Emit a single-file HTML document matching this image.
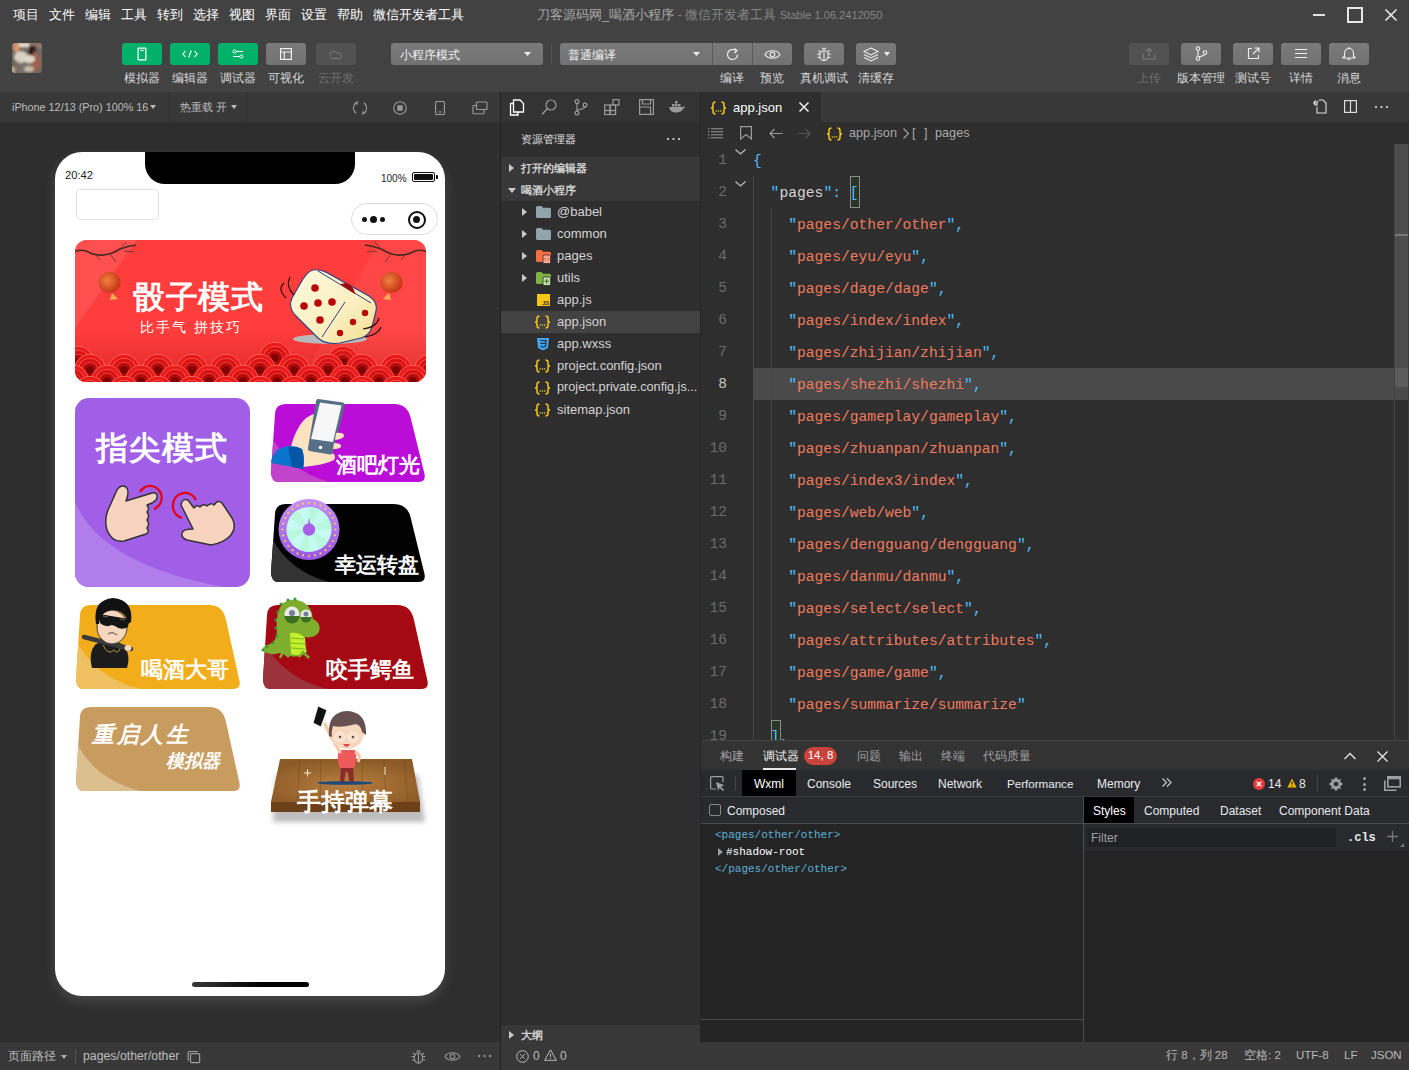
<!DOCTYPE html>
<html><head><meta charset="utf-8">
<style>
*{box-sizing:border-box;margin:0;padding:0}
html,body{width:1409px;height:1070px;overflow:hidden;background:#2e2e2e;font-family:"Liberation Sans",sans-serif;color:#ccc}
.a{position:absolute}
.t{position:absolute;white-space:pre;line-height:1}
svg{position:absolute;overflow:visible}
.btn{position:absolute;top:43px;height:22px;width:40px;border-radius:3px}
.lbl{position:absolute;top:71px;font-size:12px;line-height:14px;color:#d8d8d8;text-align:center;white-space:pre}
.mono{font-family:"Liberation Mono",monospace}
.code div{position:absolute;left:0;height:32px;line-height:32px;white-space:pre}
.ln{position:absolute;left:701px;width:26px;text-align:right;font-family:"Liberation Mono",monospace;font-size:14.5px;color:#6b6b6b;height:32px;line-height:32px}
.q{color:#4fc1ff}.s{color:#f07a5f}.k{color:#d4d4d4}
.tree .row{position:absolute;height:22px;line-height:22px;font-size:13px;color:#cccccc;white-space:pre}
</style></head><body>

<!-- ===== top menu bar + toolbar ===== -->
<div class="a" style="left:0;top:0;width:1409px;height:92px;background:#424242"></div>
<div class="t" style="left:13px;top:8px;font-size:13px;color:#f0f0f0;word-spacing:0">项目</div>
<div class="t" style="left:49px;top:8px;font-size:13px;color:#ffffff">文件</div>
<div class="t" style="left:85px;top:8px;font-size:13px;color:#ffffff">编辑</div>
<div class="t" style="left:121px;top:8px;font-size:13px;color:#ffffff">工具</div>
<div class="t" style="left:157px;top:8px;font-size:13px;color:#ffffff">转到</div>
<div class="t" style="left:193px;top:8px;font-size:13px;color:#ffffff">选择</div>
<div class="t" style="left:229px;top:8px;font-size:13px;color:#ffffff">视图</div>
<div class="t" style="left:265px;top:8px;font-size:13px;color:#ffffff">界面</div>
<div class="t" style="left:301px;top:8px;font-size:13px;color:#ffffff">设置</div>
<div class="t" style="left:337px;top:8px;font-size:13px;color:#ffffff">帮助</div>
<div class="t" style="left:373px;top:8px;font-size:13px;color:#ffffff">微信开发者工具</div>
<div class="t" style="left:537px;top:8px;font-size:13px;color:#a8a8a8">刀客源码网_喝酒小程序<span style="color:#858585;font-size:12.6px"> - 微信开发者工具 <span style="font-size:11.1px">Stable 1.06.2412050</span></span></div>
<!-- window controls -->
<div class="a" style="left:1313px;top:14px;width:12px;height:2px;background:#e0e0e0"></div>
<div class="a" style="left:1347px;top:7px;width:16px;height:16px;border:2px solid #e8e8e8"></div>
<svg style="left:1385px;top:9px" width="12" height="12"><path d="M0.5 0.5L11.5 11.5M11.5 0.5L0.5 11.5" stroke="#e8e8e8" stroke-width="1.6"/></svg>

<!-- avatar -->
<svg style="left:12px;top:43px" width="30" height="30"><defs><clipPath id="av"><rect width="30" height="30" rx="3"/></clipPath><filter id="avb"><feGaussianBlur stdDeviation="1.3"/></filter></defs>
<g clip-path="url(#av)"><rect width="30" height="30" fill="#6e6560"/><g filter="url(#avb)">
<rect x="-2" y="-2" width="34" height="8" fill="#8a7468"/><rect x="2" y="0" width="5" height="9" fill="#d8956a"/><rect x="7" y="0" width="10" height="4" fill="#e6d8c8"/>
<rect x="17" y="3" width="7" height="12" fill="#2e1c18"/><path d="M22,8 Q30,12 28,24 L22,30 L18,22 Z" fill="#a06050"/>
<ellipse cx="9" cy="14" rx="7" ry="6" fill="#d8d0c0"/><ellipse cx="17" cy="16" rx="6" ry="4" fill="#e0d8c8"/>
<rect x="4" y="20" width="16" height="10" fill="#77706a"/><ellipse cx="17" cy="26" rx="5" ry="3" fill="#c8bca8"/><rect x="-2" y="24" width="5" height="8" fill="#c0b090"/>
</g></g></svg>
<!-- green buttons -->
<div class="btn" style="left:122px;background:#02b169"></div>
<svg style="left:137px;top:47px" width="10" height="14"><rect x="1.1" y="1.1" width="7.8" height="11.8" rx="0.5" fill="none" stroke="#fff" stroke-width="1.2"/><line x1="3.2" y1="3.4" x2="6.8" y2="3.4" stroke="#fff" stroke-width="1"/></svg>
<div class="btn" style="left:170px;background:#02b169"></div>
<svg style="left:182px;top:50px" width="16" height="8"><path d="M3.5 1L0.8 4L3.5 7M12.5 1L15.2 4L12.5 7M9.3 0.5L6.7 7.5" fill="none" stroke="#fff" stroke-width="1.1"/></svg>
<div class="btn" style="left:218px;background:#02b169"></div>
<svg style="left:232px;top:49px" width="12" height="10"><path d="M3 2.5H11M1 7.5H8" stroke="#fff" stroke-width="1"/><circle cx="2.6" cy="2.5" r="1.6" fill="#02b169" stroke="#fff" stroke-width="1"/><circle cx="9.4" cy="7.5" r="1.6" fill="#02b169" stroke="#fff" stroke-width="1"/></svg>
<div class="btn" style="left:266px;background:linear-gradient(#7a7a7a,#727272)"></div>
<svg style="left:280px;top:48px" width="12" height="12"><rect x="0.6" y="0.6" width="10.8" height="10.8" fill="none" stroke="#f0f0f0" stroke-width="1.2"/><path d="M0.6 4H11.4M4.3 4V11.4" stroke="#f0f0f0" stroke-width="1.2"/></svg>
<div class="btn" style="left:316px;background:#525252"></div>
<svg style="left:328px;top:49px" width="16" height="11"><path d="M4,9.5 A3.8,3.8 0 1 1 9,4.2 A3,3 0 1 1 12,9.5 Z" fill="none" stroke="#7a7a7a" stroke-width="1"/></svg>
<div class="lbl" style="left:117px;width:50px">模拟器</div>
<div class="lbl" style="left:165px;width:50px">编辑器</div>
<div class="lbl" style="left:213px;width:50px">调试器</div>
<div class="lbl" style="left:261px;width:50px">可视化</div>
<div class="lbl" style="left:311px;width:50px;color:#6e6e6e">云开发</div>

<!-- selects -->
<div class="a" style="left:391px;top:43px;width:152px;height:22px;border-radius:3px;background:linear-gradient(#7a7a7a,#727272)"></div>
<div class="t" style="left:400px;top:49px;font-size:12px;color:#f0f0f0">小程序模式</div>
<svg style="left:524px;top:52px" width="7" height="4"><path d="M0 0H7L3.5 4Z" fill="#eee"/></svg>
<div class="a" style="left:551px;top:44px;width:1px;height:20px;background:#555"></div>
<div class="a" style="left:560px;top:43px;width:232px;height:22px;border-radius:3px;background:linear-gradient(#7a7a7a,#727272)"></div>
<div class="a" style="left:712px;top:43px;width:1px;height:22px;background:#5a5a5a"></div>
<div class="a" style="left:752px;top:43px;width:1px;height:22px;background:#5a5a5a"></div>
<div class="t" style="left:568px;top:49px;font-size:12px;color:#f0f0f0">普通编译</div>
<svg style="left:693px;top:52px" width="7" height="4"><path d="M0 0H7L3.5 4Z" fill="#eee"/></svg>
<svg style="left:725px;top:47px" width="15" height="15"><path d="M12.5 7.5A5 5 0 1 1 10.5 3.5" fill="none" stroke="#eee" stroke-width="1.2"/><path d="M9 1.5L12 3.5L9.5 6" fill="none" stroke="#eee" stroke-width="1.2"/></svg>
<svg style="left:764px;top:49px" width="17" height="11"><path d="M1 5.5C4 0.5 13 0.5 16 5.5C13 10.5 4 10.5 1 5.5Z" fill="none" stroke="#eee" stroke-width="1.1"/><circle cx="8.5" cy="5.5" r="2.3" fill="none" stroke="#eee" stroke-width="1.1"/></svg>
<div class="btn" style="left:804px;background:linear-gradient(#7a7a7a,#727272)"></div>
<svg style="left:816px;top:46px" width="16" height="16"><ellipse cx="8" cy="9.5" rx="4.2" ry="5" fill="none" stroke="#eee" stroke-width="1.1"/><path d="M8 4.5V14.5M6 3.5Q8 1 10 3.5M3.8 8H1M3.8 11.5H1.5M12.2 8H15M12.2 11.5H14.5M4.5 6L2.5 4.5M11.5 6L13.5 4.5" fill="none" stroke="#eee" stroke-width="1.1"/></svg>
<div class="btn" style="left:856px;background:linear-gradient(#7a7a7a,#727272)"></div>
<svg style="left:863px;top:47px" width="16" height="14"><path d="M8 1L15 4.5L8 8L1 4.5Z" fill="none" stroke="#eee" stroke-width="1.1"/><path d="M1 7.5L8 11L15 7.5M1 10.5L8 14L15 10.5" fill="none" stroke="#eee" stroke-width="1.1"/></svg>
<svg style="left:884px;top:52px" width="6" height="4"><path d="M0 0H6L3 4Z" fill="#eee"/></svg>
<div class="lbl" style="left:712px;width:40px">编译</div>
<div class="lbl" style="left:752px;width:40px">预览</div>
<div class="lbl" style="left:794px;width:60px">真机调试</div>
<div class="lbl" style="left:846px;width:60px">清缓存</div>

<!-- right buttons -->
<div class="btn" style="left:1129px;background:#525252"></div>
<svg style="left:1142px;top:47px" width="14" height="13"><path d="M7 9V1.5M4 4.5L7 1.5L10 4.5M1 7V12H13V7" fill="none" stroke="#777" stroke-width="1.1"/></svg>
<div class="btn" style="left:1181px;background:linear-gradient(#7a7a7a,#727272)"></div>
<svg style="left:1195px;top:46px" width="13" height="15"><circle cx="3" cy="2.5" r="1.8" fill="none" stroke="#eee" stroke-width="1.1"/><circle cx="3" cy="12.5" r="1.8" fill="none" stroke="#eee" stroke-width="1.1"/><circle cx="10" cy="6.5" r="1.8" fill="none" stroke="#eee" stroke-width="1.1"/><path d="M3 4.3V10.7M3.8 10.8Q9 10 10 8.3" fill="none" stroke="#eee" stroke-width="1.1"/></svg>
<div class="btn" style="left:1233px;background:linear-gradient(#7a7a7a,#727272)"></div>
<svg style="left:1247px;top:47px" width="13" height="13"><path d="M5 1.5H1.5V11.5H11.5V8M7.5 1H12V5.5M12 1L6 7" fill="none" stroke="#eee" stroke-width="1.1"/></svg>
<div class="btn" style="left:1281px;background:linear-gradient(#7a7a7a,#727272)"></div>
<svg style="left:1294px;top:48px" width="14" height="11"><path d="M1 1.5H13M1 5.5H13M1 9.5H13" stroke="#eee" stroke-width="1.1"/></svg>
<div class="btn" style="left:1329px;background:linear-gradient(#7a7a7a,#727272)"></div>
<svg style="left:1342px;top:46px" width="14" height="15"><path d="M2.5 11V7A4.5 4.5 0 0 1 11.5 7V11H13V12H1V11Z" fill="none" stroke="#eee" stroke-width="1.1"/><path d="M7 1V2.5M5.5 13.5H8.5" stroke="#eee" stroke-width="1.1"/></svg>
<div class="lbl" style="left:1119px;width:60px;color:#6e6e6e">上传</div>
<div class="lbl" style="left:1171px;width:60px">版本管理</div>
<div class="lbl" style="left:1223px;width:60px">测试号</div>
<div class="lbl" style="left:1271px;width:60px">详情</div>
<div class="lbl" style="left:1319px;width:60px">消息</div>

<!-- ===== simulator panel ===== -->
<div class="a" style="left:0;top:92px;width:500px;height:30px;background:#383838"></div>
<div class="t" style="left:12px;top:102px;font-size:10.8px;color:#bdbdbd">iPhone 12/13 (Pro) 100% 16</div>
<svg style="left:150px;top:105px" width="6" height="4"><path d="M0 0H6L3 4Z" fill="#bbb"/></svg>
<div class="a" style="left:168px;top:92px;width:1px;height:30px;background:#333"></div>
<div class="t" style="left:180px;top:102px;font-size:11px;color:#bdbdbd">热重载 开</div>
<svg style="left:231px;top:105px" width="6" height="4"><path d="M0 0H6L3 4Z" fill="#bbb"/></svg>
<div class="a" style="left:247px;top:92px;width:1px;height:30px;background:#333"></div>
<svg style="left:352px;top:100px" width="16" height="16"><path d="M6.2,1.9 A6.3,6.3 0 0 0 4.3,13.2 M9.8,14.1 A6.3,6.3 0 0 0 11.7,2.8" fill="none" stroke="#9a9a9a" stroke-width="1.1"/><path d="M2.6,4.2 L4.3,2.6 L5.3,4.8 M13.4,11.8 L11.7,13.4 L10.7,11.2" fill="none" stroke="#9a9a9a" stroke-width="1.1"/></svg>
<svg style="left:393px;top:101px" width="14" height="14"><circle cx="7" cy="7" r="6.3" fill="none" stroke="#999" stroke-width="1.1"/><rect x="4.3" y="4.3" width="5.4" height="5.4" fill="#999"/></svg>
<svg style="left:435px;top:101px" width="10" height="14"><rect x="0.55" y="0.55" width="8.9" height="12.9" rx="1" fill="none" stroke="#9a9a9a" stroke-width="1.1"/><path d="M3.2 11H6.8" stroke="#9a9a9a" stroke-width="1.1"/></svg>
<svg style="left:472px;top:101px" width="16" height="14"><rect x="4.55" y="1.05" width="10.4" height="7.4" rx="0.8" fill="none" stroke="#9a9a9a" stroke-width="1.1"/><path d="M4.5,4.5 H1.6 Q1,4.5 1,5.1 V12.2 Q1,12.8 1.6,12.8 H11.4 Q12,12.8 12,12.2 V8.6" fill="none" stroke="#9a9a9a" stroke-width="1.1"/></svg>

<!-- phone -->
<div class="a" style="left:55px;top:152px;width:390px;height:844px;border-radius:27px;background:#fff;box-shadow:0 5px 12px rgba(255,255,255,.13)"></div>
<div class="a" style="left:145px;top:152px;width:210px;height:32px;background:#000;border-radius:0 0 20px 20px"></div>
<div class="t" style="left:65px;top:170px;font-size:11.2px;color:#222">20:42</div>
<div class="t" style="left:381px;top:174px;font-size:10px;color:#222">100%</div>
<div class="a" style="left:412px;top:172px;width:23px;height:10px;border:1.3px solid #111;border-radius:2px;padding:1px"><div style="width:100%;height:100%;background:#111;border-radius:1px"></div></div>
<div class="a" style="left:435.5px;top:175px;width:2px;height:4px;background:#111;border-radius:0 1px 1px 0"></div>
<div class="a" style="left:76px;top:189px;width:83px;height:31px;border:1px solid #e2e2e2;border-radius:4px"></div>
<div class="a" style="left:351px;top:203px;width:87px;height:32px;border:1px solid #dcdcdc;border-radius:16px;background:#fff"></div>
<div class="a" style="left:362px;top:217px;width:5px;height:5px;border-radius:50%;background:#111"></div>
<div class="a" style="left:369.5px;top:215.5px;width:7.5px;height:7.5px;border-radius:50%;background:#111"></div>
<div class="a" style="left:379.5px;top:217px;width:5px;height:5px;border-radius:50%;background:#111"></div>
<div class="a" style="left:407.5px;top:210.5px;width:18px;height:18px;border-radius:50%;border:2.2px solid #111"></div>
<div class="a" style="left:413px;top:216px;width:7px;height:7px;border-radius:50%;background:#111"></div>
<div class="a" style="left:192px;top:982px;width:117px;height:5px;border-radius:3px;background:linear-gradient(90deg,#3a3a3a,#000 60%)"></div>

<!-- PHONE CONTENT -->
<svg style="left:0;top:0" width="1409" height="1070" viewBox="0 0 1409 1070">
<defs>
<clipPath id="cb"><rect x="75" y="240" width="351" height="142" rx="12"/></clipPath>
<linearGradient id="dg" x1="0" y1="0" x2="1" y2="1"><stop offset="0" stop-color="#fff8dc"/><stop offset="0.6" stop-color="#fbefc0"/><stop offset="1" stop-color="#f3dc8e"/></linearGradient>
<radialGradient id="lan" cx="0.4" cy="0.4" r="0.7"><stop offset="0" stop-color="#f08040"/><stop offset="1" stop-color="#c02a10"/></radialGradient>
<linearGradient id="wood" x1="0" y1="0" x2="0" y2="1"><stop offset="0" stop-color="#a0703c"/><stop offset="0.75" stop-color="#8a5a2c"/><stop offset="1" stop-color="#5a3616"/></linearGradient>
<linearGradient id="ring" x1="0" y1="0" x2="0" y2="1"><stop offset="0" stop-color="#c590f5"/><stop offset="1" stop-color="#9a55e6"/></linearGradient>
<filter id="sh" x="-20%" y="-20%" width="140%" height="160%"><feGaussianBlur stdDeviation="2.5"/></filter>
</defs>
<g clip-path="url(#cb)">
<rect x="75" y="240" width="351" height="142" fill="#ff3d3d"/>
<path d="M75,240 L137,240 L75,328 Z" fill="#ff5252" opacity="0.9"/>
<path d="M380,240 L426,240 L426,382 L300,382 Z" fill="#ff5050" opacity="0.55"/>
<linearGradient id="shd" x1="0" y1="0" x2="0" y2="1"><stop offset="0" stop-color="#b00000" stop-opacity="0"/><stop offset="1" stop-color="#900000" stop-opacity="0.35"/></linearGradient><rect x="75" y="330" width="351" height="52" fill="url(#shd)"/>
<circle cx="78" cy="362" r="16" fill="#ff7060"/><circle cx="78" cy="362" r="15.3" fill="#ea1a1c"/><circle cx="78" cy="362" r="12" fill="#ff6050"/><circle cx="78" cy="362" r="11.3" fill="#d81214"/><circle cx="78" cy="362" r="8" fill="#f04a3a"/><circle cx="78" cy="362" r="7.3" fill="#b80c0c"/><circle cx="78" cy="362" r="4" fill="#800404"/>
<circle cx="275" cy="358" r="16" fill="#ff7060"/><circle cx="275" cy="358" r="15.3" fill="#ea1a1c"/><circle cx="275" cy="358" r="12" fill="#ff6050"/><circle cx="275" cy="358" r="11.3" fill="#d81214"/><circle cx="275" cy="358" r="8" fill="#f04a3a"/><circle cx="275" cy="358" r="7.3" fill="#b80c0c"/><circle cx="275" cy="358" r="4" fill="#800404"/>
<circle cx="343" cy="362" r="16" fill="#ff7060"/><circle cx="343" cy="362" r="15.3" fill="#ea1a1c"/><circle cx="343" cy="362" r="12" fill="#ff6050"/><circle cx="343" cy="362" r="11.3" fill="#d81214"/><circle cx="343" cy="362" r="8" fill="#f04a3a"/><circle cx="343" cy="362" r="7.3" fill="#b80c0c"/><circle cx="343" cy="362" r="4" fill="#800404"/>
<circle cx="56" cy="370" r="16" fill="#ff7060"/><circle cx="56" cy="370" r="15.3" fill="#ea1a1c"/><circle cx="56" cy="370" r="12" fill="#ff6050"/><circle cx="56" cy="370" r="11.3" fill="#d81214"/><circle cx="56" cy="370" r="8" fill="#f04a3a"/><circle cx="56" cy="370" r="7.3" fill="#b80c0c"/><circle cx="56" cy="370" r="4" fill="#800404"/>
<circle cx="90" cy="370" r="16" fill="#ff7060"/><circle cx="90" cy="370" r="15.3" fill="#ea1a1c"/><circle cx="90" cy="370" r="12" fill="#ff6050"/><circle cx="90" cy="370" r="11.3" fill="#d81214"/><circle cx="90" cy="370" r="8" fill="#f04a3a"/><circle cx="90" cy="370" r="7.3" fill="#b80c0c"/><circle cx="90" cy="370" r="4" fill="#800404"/>
<circle cx="124" cy="370" r="16" fill="#ff7060"/><circle cx="124" cy="370" r="15.3" fill="#ea1a1c"/><circle cx="124" cy="370" r="12" fill="#ff6050"/><circle cx="124" cy="370" r="11.3" fill="#d81214"/><circle cx="124" cy="370" r="8" fill="#f04a3a"/><circle cx="124" cy="370" r="7.3" fill="#b80c0c"/><circle cx="124" cy="370" r="4" fill="#800404"/>
<circle cx="158" cy="370" r="16" fill="#ff7060"/><circle cx="158" cy="370" r="15.3" fill="#ea1a1c"/><circle cx="158" cy="370" r="12" fill="#ff6050"/><circle cx="158" cy="370" r="11.3" fill="#d81214"/><circle cx="158" cy="370" r="8" fill="#f04a3a"/><circle cx="158" cy="370" r="7.3" fill="#b80c0c"/><circle cx="158" cy="370" r="4" fill="#800404"/>
<circle cx="192" cy="370" r="16" fill="#ff7060"/><circle cx="192" cy="370" r="15.3" fill="#ea1a1c"/><circle cx="192" cy="370" r="12" fill="#ff6050"/><circle cx="192" cy="370" r="11.3" fill="#d81214"/><circle cx="192" cy="370" r="8" fill="#f04a3a"/><circle cx="192" cy="370" r="7.3" fill="#b80c0c"/><circle cx="192" cy="370" r="4" fill="#800404"/>
<circle cx="226" cy="370" r="16" fill="#ff7060"/><circle cx="226" cy="370" r="15.3" fill="#ea1a1c"/><circle cx="226" cy="370" r="12" fill="#ff6050"/><circle cx="226" cy="370" r="11.3" fill="#d81214"/><circle cx="226" cy="370" r="8" fill="#f04a3a"/><circle cx="226" cy="370" r="7.3" fill="#b80c0c"/><circle cx="226" cy="370" r="4" fill="#800404"/>
<circle cx="260" cy="370" r="16" fill="#ff7060"/><circle cx="260" cy="370" r="15.3" fill="#ea1a1c"/><circle cx="260" cy="370" r="12" fill="#ff6050"/><circle cx="260" cy="370" r="11.3" fill="#d81214"/><circle cx="260" cy="370" r="8" fill="#f04a3a"/><circle cx="260" cy="370" r="7.3" fill="#b80c0c"/><circle cx="260" cy="370" r="4" fill="#800404"/>
<circle cx="294" cy="370" r="16" fill="#ff7060"/><circle cx="294" cy="370" r="15.3" fill="#ea1a1c"/><circle cx="294" cy="370" r="12" fill="#ff6050"/><circle cx="294" cy="370" r="11.3" fill="#d81214"/><circle cx="294" cy="370" r="8" fill="#f04a3a"/><circle cx="294" cy="370" r="7.3" fill="#b80c0c"/><circle cx="294" cy="370" r="4" fill="#800404"/>
<circle cx="328" cy="370" r="16" fill="#ff7060"/><circle cx="328" cy="370" r="15.3" fill="#ea1a1c"/><circle cx="328" cy="370" r="12" fill="#ff6050"/><circle cx="328" cy="370" r="11.3" fill="#d81214"/><circle cx="328" cy="370" r="8" fill="#f04a3a"/><circle cx="328" cy="370" r="7.3" fill="#b80c0c"/><circle cx="328" cy="370" r="4" fill="#800404"/>
<circle cx="362" cy="370" r="16" fill="#ff7060"/><circle cx="362" cy="370" r="15.3" fill="#ea1a1c"/><circle cx="362" cy="370" r="12" fill="#ff6050"/><circle cx="362" cy="370" r="11.3" fill="#d81214"/><circle cx="362" cy="370" r="8" fill="#f04a3a"/><circle cx="362" cy="370" r="7.3" fill="#b80c0c"/><circle cx="362" cy="370" r="4" fill="#800404"/>
<circle cx="396" cy="370" r="16" fill="#ff7060"/><circle cx="396" cy="370" r="15.3" fill="#ea1a1c"/><circle cx="396" cy="370" r="12" fill="#ff6050"/><circle cx="396" cy="370" r="11.3" fill="#d81214"/><circle cx="396" cy="370" r="8" fill="#f04a3a"/><circle cx="396" cy="370" r="7.3" fill="#b80c0c"/><circle cx="396" cy="370" r="4" fill="#800404"/>
<circle cx="430" cy="370" r="16" fill="#ff7060"/><circle cx="430" cy="370" r="15.3" fill="#ea1a1c"/><circle cx="430" cy="370" r="12" fill="#ff6050"/><circle cx="430" cy="370" r="11.3" fill="#d81214"/><circle cx="430" cy="370" r="8" fill="#f04a3a"/><circle cx="430" cy="370" r="7.3" fill="#b80c0c"/><circle cx="430" cy="370" r="4" fill="#800404"/>
<circle cx="73" cy="381" r="16" fill="#ff7060"/><circle cx="73" cy="381" r="15.3" fill="#ea1a1c"/><circle cx="73" cy="381" r="12" fill="#ff6050"/><circle cx="73" cy="381" r="11.3" fill="#d81214"/><circle cx="73" cy="381" r="8" fill="#f04a3a"/><circle cx="73" cy="381" r="7.3" fill="#b80c0c"/><circle cx="73" cy="381" r="4" fill="#800404"/>
<circle cx="107" cy="381" r="16" fill="#ff7060"/><circle cx="107" cy="381" r="15.3" fill="#ea1a1c"/><circle cx="107" cy="381" r="12" fill="#ff6050"/><circle cx="107" cy="381" r="11.3" fill="#d81214"/><circle cx="107" cy="381" r="8" fill="#f04a3a"/><circle cx="107" cy="381" r="7.3" fill="#b80c0c"/><circle cx="107" cy="381" r="4" fill="#800404"/>
<circle cx="141" cy="381" r="16" fill="#ff7060"/><circle cx="141" cy="381" r="15.3" fill="#ea1a1c"/><circle cx="141" cy="381" r="12" fill="#ff6050"/><circle cx="141" cy="381" r="11.3" fill="#d81214"/><circle cx="141" cy="381" r="8" fill="#f04a3a"/><circle cx="141" cy="381" r="7.3" fill="#b80c0c"/><circle cx="141" cy="381" r="4" fill="#800404"/>
<circle cx="175" cy="381" r="16" fill="#ff7060"/><circle cx="175" cy="381" r="15.3" fill="#ea1a1c"/><circle cx="175" cy="381" r="12" fill="#ff6050"/><circle cx="175" cy="381" r="11.3" fill="#d81214"/><circle cx="175" cy="381" r="8" fill="#f04a3a"/><circle cx="175" cy="381" r="7.3" fill="#b80c0c"/><circle cx="175" cy="381" r="4" fill="#800404"/>
<circle cx="209" cy="381" r="16" fill="#ff7060"/><circle cx="209" cy="381" r="15.3" fill="#ea1a1c"/><circle cx="209" cy="381" r="12" fill="#ff6050"/><circle cx="209" cy="381" r="11.3" fill="#d81214"/><circle cx="209" cy="381" r="8" fill="#f04a3a"/><circle cx="209" cy="381" r="7.3" fill="#b80c0c"/><circle cx="209" cy="381" r="4" fill="#800404"/>
<circle cx="243" cy="381" r="16" fill="#ff7060"/><circle cx="243" cy="381" r="15.3" fill="#ea1a1c"/><circle cx="243" cy="381" r="12" fill="#ff6050"/><circle cx="243" cy="381" r="11.3" fill="#d81214"/><circle cx="243" cy="381" r="8" fill="#f04a3a"/><circle cx="243" cy="381" r="7.3" fill="#b80c0c"/><circle cx="243" cy="381" r="4" fill="#800404"/>
<circle cx="277" cy="381" r="16" fill="#ff7060"/><circle cx="277" cy="381" r="15.3" fill="#ea1a1c"/><circle cx="277" cy="381" r="12" fill="#ff6050"/><circle cx="277" cy="381" r="11.3" fill="#d81214"/><circle cx="277" cy="381" r="8" fill="#f04a3a"/><circle cx="277" cy="381" r="7.3" fill="#b80c0c"/><circle cx="277" cy="381" r="4" fill="#800404"/>
<circle cx="311" cy="381" r="16" fill="#ff7060"/><circle cx="311" cy="381" r="15.3" fill="#ea1a1c"/><circle cx="311" cy="381" r="12" fill="#ff6050"/><circle cx="311" cy="381" r="11.3" fill="#d81214"/><circle cx="311" cy="381" r="8" fill="#f04a3a"/><circle cx="311" cy="381" r="7.3" fill="#b80c0c"/><circle cx="311" cy="381" r="4" fill="#800404"/>
<circle cx="345" cy="381" r="16" fill="#ff7060"/><circle cx="345" cy="381" r="15.3" fill="#ea1a1c"/><circle cx="345" cy="381" r="12" fill="#ff6050"/><circle cx="345" cy="381" r="11.3" fill="#d81214"/><circle cx="345" cy="381" r="8" fill="#f04a3a"/><circle cx="345" cy="381" r="7.3" fill="#b80c0c"/><circle cx="345" cy="381" r="4" fill="#800404"/>
<circle cx="379" cy="381" r="16" fill="#ff7060"/><circle cx="379" cy="381" r="15.3" fill="#ea1a1c"/><circle cx="379" cy="381" r="12" fill="#ff6050"/><circle cx="379" cy="381" r="11.3" fill="#d81214"/><circle cx="379" cy="381" r="8" fill="#f04a3a"/><circle cx="379" cy="381" r="7.3" fill="#b80c0c"/><circle cx="379" cy="381" r="4" fill="#800404"/>
<circle cx="413" cy="381" r="16" fill="#ff7060"/><circle cx="413" cy="381" r="15.3" fill="#ea1a1c"/><circle cx="413" cy="381" r="12" fill="#ff6050"/><circle cx="413" cy="381" r="11.3" fill="#d81214"/><circle cx="413" cy="381" r="8" fill="#f04a3a"/><circle cx="413" cy="381" r="7.3" fill="#b80c0c"/><circle cx="413" cy="381" r="4" fill="#800404"/>
<circle cx="447" cy="381" r="16" fill="#ff7060"/><circle cx="447" cy="381" r="15.3" fill="#ea1a1c"/><circle cx="447" cy="381" r="12" fill="#ff6050"/><circle cx="447" cy="381" r="11.3" fill="#d81214"/><circle cx="447" cy="381" r="8" fill="#f04a3a"/><circle cx="447" cy="381" r="7.3" fill="#b80c0c"/><circle cx="447" cy="381" r="4" fill="#800404"/>
<circle cx="56" cy="392" r="16" fill="#ff7060"/><circle cx="56" cy="392" r="15.3" fill="#ea1a1c"/><circle cx="56" cy="392" r="12" fill="#ff6050"/><circle cx="56" cy="392" r="11.3" fill="#d81214"/><circle cx="56" cy="392" r="8" fill="#f04a3a"/><circle cx="56" cy="392" r="7.3" fill="#b80c0c"/><circle cx="56" cy="392" r="4" fill="#800404"/>
<circle cx="90" cy="392" r="16" fill="#ff7060"/><circle cx="90" cy="392" r="15.3" fill="#ea1a1c"/><circle cx="90" cy="392" r="12" fill="#ff6050"/><circle cx="90" cy="392" r="11.3" fill="#d81214"/><circle cx="90" cy="392" r="8" fill="#f04a3a"/><circle cx="90" cy="392" r="7.3" fill="#b80c0c"/><circle cx="90" cy="392" r="4" fill="#800404"/>
<circle cx="124" cy="392" r="16" fill="#ff7060"/><circle cx="124" cy="392" r="15.3" fill="#ea1a1c"/><circle cx="124" cy="392" r="12" fill="#ff6050"/><circle cx="124" cy="392" r="11.3" fill="#d81214"/><circle cx="124" cy="392" r="8" fill="#f04a3a"/><circle cx="124" cy="392" r="7.3" fill="#b80c0c"/><circle cx="124" cy="392" r="4" fill="#800404"/>
<circle cx="158" cy="392" r="16" fill="#ff7060"/><circle cx="158" cy="392" r="15.3" fill="#ea1a1c"/><circle cx="158" cy="392" r="12" fill="#ff6050"/><circle cx="158" cy="392" r="11.3" fill="#d81214"/><circle cx="158" cy="392" r="8" fill="#f04a3a"/><circle cx="158" cy="392" r="7.3" fill="#b80c0c"/><circle cx="158" cy="392" r="4" fill="#800404"/>
<circle cx="192" cy="392" r="16" fill="#ff7060"/><circle cx="192" cy="392" r="15.3" fill="#ea1a1c"/><circle cx="192" cy="392" r="12" fill="#ff6050"/><circle cx="192" cy="392" r="11.3" fill="#d81214"/><circle cx="192" cy="392" r="8" fill="#f04a3a"/><circle cx="192" cy="392" r="7.3" fill="#b80c0c"/><circle cx="192" cy="392" r="4" fill="#800404"/>
<circle cx="226" cy="392" r="16" fill="#ff7060"/><circle cx="226" cy="392" r="15.3" fill="#ea1a1c"/><circle cx="226" cy="392" r="12" fill="#ff6050"/><circle cx="226" cy="392" r="11.3" fill="#d81214"/><circle cx="226" cy="392" r="8" fill="#f04a3a"/><circle cx="226" cy="392" r="7.3" fill="#b80c0c"/><circle cx="226" cy="392" r="4" fill="#800404"/>
<circle cx="260" cy="392" r="16" fill="#ff7060"/><circle cx="260" cy="392" r="15.3" fill="#ea1a1c"/><circle cx="260" cy="392" r="12" fill="#ff6050"/><circle cx="260" cy="392" r="11.3" fill="#d81214"/><circle cx="260" cy="392" r="8" fill="#f04a3a"/><circle cx="260" cy="392" r="7.3" fill="#b80c0c"/><circle cx="260" cy="392" r="4" fill="#800404"/>
<circle cx="294" cy="392" r="16" fill="#ff7060"/><circle cx="294" cy="392" r="15.3" fill="#ea1a1c"/><circle cx="294" cy="392" r="12" fill="#ff6050"/><circle cx="294" cy="392" r="11.3" fill="#d81214"/><circle cx="294" cy="392" r="8" fill="#f04a3a"/><circle cx="294" cy="392" r="7.3" fill="#b80c0c"/><circle cx="294" cy="392" r="4" fill="#800404"/>
<circle cx="328" cy="392" r="16" fill="#ff7060"/><circle cx="328" cy="392" r="15.3" fill="#ea1a1c"/><circle cx="328" cy="392" r="12" fill="#ff6050"/><circle cx="328" cy="392" r="11.3" fill="#d81214"/><circle cx="328" cy="392" r="8" fill="#f04a3a"/><circle cx="328" cy="392" r="7.3" fill="#b80c0c"/><circle cx="328" cy="392" r="4" fill="#800404"/>
<circle cx="362" cy="392" r="16" fill="#ff7060"/><circle cx="362" cy="392" r="15.3" fill="#ea1a1c"/><circle cx="362" cy="392" r="12" fill="#ff6050"/><circle cx="362" cy="392" r="11.3" fill="#d81214"/><circle cx="362" cy="392" r="8" fill="#f04a3a"/><circle cx="362" cy="392" r="7.3" fill="#b80c0c"/><circle cx="362" cy="392" r="4" fill="#800404"/>
<circle cx="396" cy="392" r="16" fill="#ff7060"/><circle cx="396" cy="392" r="15.3" fill="#ea1a1c"/><circle cx="396" cy="392" r="12" fill="#ff6050"/><circle cx="396" cy="392" r="11.3" fill="#d81214"/><circle cx="396" cy="392" r="8" fill="#f04a3a"/><circle cx="396" cy="392" r="7.3" fill="#b80c0c"/><circle cx="396" cy="392" r="4" fill="#800404"/>
<circle cx="430" cy="392" r="16" fill="#ff7060"/><circle cx="430" cy="392" r="15.3" fill="#ea1a1c"/><circle cx="430" cy="392" r="12" fill="#ff6050"/><circle cx="430" cy="392" r="11.3" fill="#d81214"/><circle cx="430" cy="392" r="8" fill="#f04a3a"/><circle cx="430" cy="392" r="7.3" fill="#b80c0c"/><circle cx="430" cy="392" r="4" fill="#800404"/>
<path d="M74,252 Q80,249 86,251 Q95,256 104,255 Q112,254 120,249 Q128,246 136,245" fill="none" stroke="#4a2a20" stroke-width="1.6"/>
<path d="M96,255 L100,260 M110,254 L116,262 M120,249 L126,242 M124,251 L134,252" fill="none" stroke="#5a3028" stroke-width="0.8"/>
<path d="M427,252 Q421,249 415,251 Q406,256 397,255 Q389,254 381,249 Q373,246 365,245" fill="none" stroke="#4a2a20" stroke-width="1.6"/>
<path d="M405,255 L401,260 M391,254 L385,262 M381,249 L375,242 M377,251 L367,252" fill="none" stroke="#5a3028" stroke-width="0.8"/>
<ellipse cx="109.5" cy="282.5" rx="11" ry="10.5" fill="url(#lan)"/>
<path d="M112,293 L118,299 L110,300 Z" fill="#f0b050"/>
<ellipse cx="391.5" cy="282.5" rx="11" ry="10.5" fill="url(#lan)"/>
<path d="M389,293 L383,299 L391,300 Z" fill="#f0b050"/>
<ellipse cx="330" cy="339" rx="37" ry="5" fill="#b9b9b9"/>
<path d="M317,270 Q310,268 303,279 L292,298 Q288,307 295,315 L318,338 Q326,345 340,343 L361,338 Q369,336 372,327 L376,311 Q378,302 369,296 L331,275 Q323,270 317,270 Z" fill="url(#dg)" stroke="#2c3f86" stroke-width="1.1"/>
<path d="M318,271 L371,303" fill="none" stroke="#2c3f86" stroke-width="1"/>
<path d="M345,302 L322,337" fill="none" stroke="#2c3f86" stroke-width="1"/>
<path d="M347,283 Q355,288 355,294 Q348,290 340,284 Z" fill="#a00a0a"/>
<circle cx="315" cy="288" r="3.8" fill="#b80808"/>
<circle cx="304" cy="306" r="3.8" fill="#b80808"/>
<circle cx="318" cy="303" r="3.8" fill="#b80808"/>
<circle cx="332" cy="302" r="3.8" fill="#b80808"/>
<circle cx="320" cy="320" r="3.8" fill="#b80808"/>
<circle cx="365" cy="313" r="3.2" fill="#b80808"/>
<circle cx="353" cy="322" r="3.2" fill="#b80808"/>
<circle cx="340" cy="333" r="3.2" fill="#b80808"/>
<path d="M290,277 Q285,286 294,295 M284,283 Q277,289 286,298" fill="none" stroke="#2a1010" stroke-width="1.2"/>
<path d="M379,318 Q377,327 363,329 M381,327 Q378,335 365,337" fill="none" stroke="#2a1010" stroke-width="1.2"/>
</g>
<text x="133" y="307.5" font-family="Liberation Sans, sans-serif" font-size="32" font-weight="bold" fill="#fff" letter-spacing="0.5">骰子模式</text>
<text x="140" y="332" font-family="Liberation Sans, sans-serif" font-size="14" fill="#fff" letter-spacing="2">比手气 拼技巧</text>
<clipPath id="cp"><rect x="75" y="398" width="175" height="189" rx="14"/></clipPath>
<g clip-path="url(#cp)"><rect x="75" y="398" width="175" height="189" fill="#a05fe6"/>
<path d="M73,496 Q95,565 234,589 L73,589 Z" fill="#b07deb"/></g>
<text x="96" y="459" font-family="Liberation Sans, sans-serif" font-size="32" font-weight="bold" fill="#fff" letter-spacing="1">指尖模式</text>
<path d="M152,486 A12,12 0 0 1 154,509" fill="none" stroke="#e60012" stroke-width="2.2"/>
<path d="M140,492 A12,12 0 0 1 152,486" fill="none" stroke="#e60012" stroke-width="2.2"/>
<path d="M117,490 Q121,484 126,487 Q130,491 126,501 L152,493 Q158,492 157,498 Q156,502 147,505 Q150,509 147,512 Q150,516 147,520 Q150,524 147,528 Q150,532 146,534 L124,541 Q112,543 107,530 Q104,520 108,510 Z" fill="#f8d3c0" stroke="#333" stroke-width="1.5" stroke-linejoin="round"/>
<path d="M196,500 A12,12 0 0 0 173,505 A12,12 0 0 0 182,518" fill="none" stroke="#e60012" stroke-width="2.2"/>
<path d="M181,505 Q182,498 188,500 L194,508 Q197,504 200,507 Q203,503 207,506 Q211,502 214,505 Q218,499 222,503 L232,518 Q237,527 231,535 Q224,543 211,545 L187,540 Q181,538 182,533 Q183,529 193,529 Z" fill="#f8d3c0" stroke="#333" stroke-width="1.5" stroke-linejoin="round"/>
<clipPath id="cm"><path d="M285.5,404 L394,404 Q408,404 411,419 L424.5,474 Q426,482 419,482 L279,482 Q271,482 271,472 L275,414 Q275.5,404 285.5,404 Z"/></clipPath>
<g clip-path="url(#cm)"><rect x="269" y="402" width="160" height="82" fill="#bb0dd8"/><path d="M269,431 Q287.75,474.35 338,484 L269,484 Z" fill="#c344cc"/></g>
<path d="M290,452 Q292,438 300,425 Q306,416 316,413 L331,452 Q337,455 334,460 Q325,465 303,467 Z" fill="#fde2c2"/>
<path d="M271,463 Q272,451 283,447 Q294,444 302,449 Q305,458 303,469 Z" fill="#0a74cc"/>
<path d="M288,447 Q296,446 302,449 Q305,458 303,469 L292,467 Z" fill="#0656a8"/>
<path d="M318.5,399 L343,402.6 Q345,403 344.5,406 L333,452 Q332.5,455 330,454.5 L309.5,451 Q307.5,450.5 308,448 L316,401 Q316.5,398.5 318.5,399 Z" fill="#566f86"/>
<path d="M320,402.5 L341.5,405.5 L333,442 L311,439 Z" fill="#f7f7f7"/>
<circle cx="320.5" cy="447.5" r="1.8" fill="#fff"/>
<path d="M336,433 Q344,432 344,436 Q343,439 335,440 M334,443 Q342,443 341,447 Q339,449 333,449" fill="#fde2c2"/>
<text x="336" y="472" font-family="Liberation Sans, sans-serif" font-size="21" font-weight="bold" fill="#fff">酒吧灯光</text>
<clipPath id="ck"><path d="M285.5,504 L394,504 Q408,504 411,519 L424.5,574 Q426,582 419,582 L279,582 Q271,582 271,572 L275,514 Q275.5,504 285.5,504 Z"/></clipPath>
<g clip-path="url(#ck)"><rect x="269" y="502" width="160" height="82" fill="#020202"/><path d="M269,532 Q287.75,574.5 338,584 L269,584 Z" fill="#333333"/></g>
<circle cx="309" cy="529.5" r="30.5" fill="url(#ring)"/>
<circle cx="309" cy="529.5" r="22.5" fill="#c6fbf4"/>
<path d="M309,529.5 L309.00,507.00 A22.5,22.5 0 0 1 320.25,510.01 Z" fill="#b8f8dc"/>
<path d="M309,529.5 L328.49,518.25 A22.5,22.5 0 0 1 331.50,529.50 Z" fill="#b8f8dc"/>
<path d="M309,529.5 L328.49,540.75 A22.5,22.5 0 0 1 320.25,548.99 Z" fill="#b8f8dc"/>
<path d="M309,529.5 L309.00,552.00 A22.5,22.5 0 0 1 297.75,548.99 Z" fill="#b8f8dc"/>
<path d="M309,529.5 L289.51,540.75 A22.5,22.5 0 0 1 286.50,529.50 Z" fill="#b8f8dc"/>
<path d="M309,529.5 L289.51,518.25 A22.5,22.5 0 0 1 297.75,510.01 Z" fill="#b8f8dc"/>
<circle cx="335.50" cy="529.50" r="1.1" fill="#f7d24a"/>
<circle cx="334.84" cy="535.40" r="1.1" fill="#f7d24a"/>
<circle cx="332.88" cy="541.00" r="1.1" fill="#f7d24a"/>
<circle cx="329.72" cy="546.02" r="1.1" fill="#f7d24a"/>
<circle cx="325.52" cy="550.22" r="1.1" fill="#f7d24a"/>
<circle cx="320.50" cy="553.38" r="1.1" fill="#f7d24a"/>
<circle cx="314.90" cy="555.34" r="1.1" fill="#f7d24a"/>
<circle cx="309.00" cy="556.00" r="1.1" fill="#f7d24a"/>
<circle cx="303.10" cy="555.34" r="1.1" fill="#f7d24a"/>
<circle cx="297.50" cy="553.38" r="1.1" fill="#f7d24a"/>
<circle cx="292.48" cy="550.22" r="1.1" fill="#f7d24a"/>
<circle cx="288.28" cy="546.02" r="1.1" fill="#f7d24a"/>
<circle cx="285.12" cy="541.00" r="1.1" fill="#f7d24a"/>
<circle cx="283.16" cy="535.40" r="1.1" fill="#f7d24a"/>
<circle cx="282.50" cy="529.50" r="1.1" fill="#f7d24a"/>
<circle cx="283.16" cy="523.60" r="1.1" fill="#f7d24a"/>
<circle cx="285.12" cy="518.00" r="1.1" fill="#f7d24a"/>
<circle cx="288.28" cy="512.98" r="1.1" fill="#f7d24a"/>
<circle cx="292.48" cy="508.78" r="1.1" fill="#f7d24a"/>
<circle cx="297.50" cy="505.62" r="1.1" fill="#f7d24a"/>
<circle cx="303.10" cy="503.66" r="1.1" fill="#f7d24a"/>
<circle cx="309.00" cy="503.00" r="1.1" fill="#f7d24a"/>
<circle cx="314.90" cy="503.66" r="1.1" fill="#f7d24a"/>
<circle cx="320.50" cy="505.62" r="1.1" fill="#f7d24a"/>
<circle cx="325.52" cy="508.78" r="1.1" fill="#f7d24a"/>
<circle cx="329.72" cy="512.98" r="1.1" fill="#f7d24a"/>
<circle cx="332.88" cy="518.00" r="1.1" fill="#f7d24a"/>
<circle cx="334.84" cy="523.60" r="1.1" fill="#f7d24a"/>
<path d="M307.5,526.5 L309,517.5 L310.5,526.5 Z" fill="#a860e8"/>
<circle cx="309" cy="529.5" r="6.2" fill="#a860e8"/>
<text x="335" y="572" font-family="Liberation Sans, sans-serif" font-size="21" font-weight="bold" fill="#fff">幸运转盘</text>
<clipPath id="co"><path d="M90.5,605 L209,605 Q223,605 226,620 L239.5,681 Q241,689 234,689 L84,689 Q76,689 76,679 L80,615 Q80.5,605 90.5,605 Z"/></clipPath>
<g clip-path="url(#co)"><rect x="74" y="603" width="170" height="90" fill="#f2ae1a"/><path d="M74,636 Q94.5,681.05 150,691 L74,691 Z" fill="#efc05f"/></g>
<path d="M92,668 Q88,652 96,644 Q110,637 124,645 Q131,655 127,668 Z" fill="#1c1c1c"/>
<path d="M103,645 Q108,656 114,650 Q118,656 121,646" fill="none" stroke="#c8a040" stroke-width="0.9"/>
<path d="M84,637 L131,649" stroke="#3a3a3a" stroke-width="4.5" stroke-linecap="round"/>
<ellipse cx="112" cy="627" rx="15" ry="17" fill="#f6d6bf" stroke="#222" stroke-width="0.8"/>
<path d="M96,624 Q92,600 113,598 Q134,600 131,622 L128,624 Q126,611 113,610 Q100,611 99,624 Z" fill="#111"/>
<path d="M99,614 L129,619 L128,627 Q121,631 115,626 L112,625 Q105,628 100,623 Z" fill="#151515"/>
<path d="M103,616 L108,617 M120,619 L125,620" stroke="#777" stroke-width="0.8"/>
<path d="M108,634 Q112,631 117,635" fill="none" stroke="#333" stroke-width="0.9"/>
<ellipse cx="128" cy="648" rx="3.5" ry="3" fill="#f6d6bf"/>
<text x="141" y="677" font-family="Liberation Sans, sans-serif" font-size="22" font-weight="bold" fill="#fff">喝酒大哥</text>
<clipPath id="cr"><path d="M277.5,605 L397,605 Q411,605 414,620 L427.5,681 Q429,689 422,689 L271,689 Q263,689 263,679 L267,615 Q267.5,605 277.5,605 Z"/></clipPath>
<g clip-path="url(#cr)"><rect x="261" y="603" width="170" height="90" fill="#a50a14"/><path d="M261,636 Q281.5,681.05 337,691 L261,691 Z" fill="#9c323c"/></g>
<path d="M283,603 Q292,597 303,602 Q312,607 313,619 Q322,623 319,632 Q315,639 303,637 L307,652 Q301,658 290,656 L280,653 Q270,656 263,651 Q261,646 270,644 Q277,641 277,630 Q275,612 283,603 Z" fill="#7fae2e"/>
<circle cx="281" cy="604" r="1.6" fill="#3e9a3e"/>
<circle cx="288" cy="600" r="1.6" fill="#3e9a3e"/>
<circle cx="295" cy="599" r="1.6" fill="#3e9a3e"/>
<circle cx="278" cy="612" r="1.6" fill="#3e9a3e"/>
<circle cx="276" cy="620" r="1.6" fill="#3e9a3e"/>
<circle cx="276" cy="628" r="1.6" fill="#3e9a3e"/>
<circle cx="277" cy="636" r="1.6" fill="#3e9a3e"/>
<circle cx="273" cy="643" r="1.6" fill="#3e9a3e"/>
<circle cx="267" cy="647" r="1.6" fill="#3e9a3e"/>
<circle cx="263" cy="650" r="1.6" fill="#3e9a3e"/>
<path d="M290,633 Q300,632 305,638 L306,652 Q299,657 291,654 Z" fill="#c2f02c"/>
<path d="M291,638 L304,639 M291,643 L305,644 M291,648 L305,649" stroke="#6aa828" stroke-width="0.8"/>
<circle cx="292" cy="614" r="7.5" fill="#e8ece8"/><circle cx="306" cy="615" r="5.5" fill="#e8ece8"/>
<circle cx="292" cy="613" r="3" fill="#7a7a9a"/><circle cx="306" cy="614" r="2.5" fill="#7a7a9a"/>
<path d="M284.5,616 A7.5,7.5 0 0 0 299.5,616 Z" fill="#3e6e22"/><path d="M300.5,617 A5.5,5.5 0 0 0 311.5,617 Z" fill="#3e6e22"/>
<path d="M280,658 L283,652 L289,657 M299,657 L303,652 L309,658" fill="none" stroke="#7fae2e" stroke-width="2.5"/>
<text x="326" y="677" font-family="Liberation Sans, sans-serif" font-size="22" font-weight="bold" fill="#fff">咬手鳄鱼</text>
<clipPath id="ct"><path d="M90.5,707 L209,707 Q223,707 226,722 L239.5,783 Q241,791 234,791 L84,791 Q76,791 76,781 L80,717 Q80.5,707 90.5,707 Z"/></clipPath>
<g clip-path="url(#ct)"><rect x="74" y="705" width="170" height="90" fill="#c89c5e"/><path d="M74,738 Q94.5,783.05 150,793 L74,793 Z" fill="#dbbf8f"/></g>
<text x="92" y="742" font-family="Liberation Sans, sans-serif" font-size="22" font-weight="bold" font-style="italic" fill="#fff" letter-spacing="2.5">重启人生</text>
<text x="166" y="767" font-family="Liberation Sans, sans-serif" font-size="18" font-weight="bold" font-style="italic" fill="#fff">模拟器</text>
<path d="M276,775 L418,775 L425,822 L273,822 Z" fill="#888" opacity="0.55" filter="url(#sh)"/>
<radialGradient id="wtop" cx="0.5" cy="0.6" r="0.6"><stop offset="0" stop-color="#b88040"/><stop offset="1" stop-color="#8c5a28"/></radialGradient>
<path d="M280,759 L412,759 L420,802 L271,802 Z" fill="url(#wtop)"/>
<rect x="271" y="802" width="149" height="10" fill="#6e4018"/>
<path d="M300,759 L297,802 M321,759 L320,802 M362,759 L363,802 M384,759 L386,802 M404,759 L408,802" stroke="#6a4018" stroke-width="0.7" opacity="0.55"/>
<ellipse cx="345" cy="783" rx="28" ry="1.8" fill="#1c4a7a"/>
<path d="M304,773 L311,773 M307.5,769.5 L307.5,776.5 M385,767 L385,775" stroke="#f4e8d8" stroke-width="1"/>
<path d="M341,767 L340,782 L344,782 L345.5,772 L348,772 L349.5,782 L354,782 L353,767 Z" fill="#8a2a2a"/>
<path d="M339,750 Q336,760 340,768 L354,768 Q358,758 355,750 Z" fill="#ee5a5c"/>
<path d="M340,752 L331,737 L325,724" fill="none" stroke="#f6c9a8" stroke-width="3.2" stroke-linecap="round"/>
<path d="M355,752 Q362,755 358,762" fill="none" stroke="#f6c9a8" stroke-width="3"/>
<path d="M318,706 L327,710 L321,727 L313,723 Z" fill="#111" stroke="#fff" stroke-width="0.9"/>
<ellipse cx="347" cy="733" rx="17" ry="16" fill="#f8d7bf"/>
<path d="M329,736 Q327,712 347,711 Q367,712 366,735 L362,732 Q360,722 352,725 Q340,728 333,726 Q331,732 332,737 Z" fill="#665050"/>
<circle cx="340" cy="737" r="4.3" fill="none" stroke="#fff" stroke-width="1"/><circle cx="353" cy="737" r="4.3" fill="none" stroke="#fff" stroke-width="1"/>
<circle cx="340" cy="737" r="1" fill="#222"/><circle cx="353" cy="737" r="1" fill="#222"/>
<path d="M343,744 Q346.5,750 350,744 Z" fill="#e04848"/>
<text x="297" y="810" font-family="Liberation Sans, sans-serif" font-size="24" font-weight="bold" fill="#fff">手持弹幕</text>
</svg>
<!-- simulator bottom bar -->
<div class="a" style="left:0;top:1042px;width:500px;height:28px;background:#383838"></div>
<div class="t" style="left:8px;top:1050px;font-size:12px;color:#bdbdbd">页面路径</div>
<svg style="left:61px;top:1055px" width="6" height="4"><path d="M0 0H6L3 4Z" fill="#aaa"/></svg>
<div class="a" style="left:75px;top:1049px;width:1px;height:15px;background:#555"></div>
<div class="t" style="left:83px;top:1050px;font-size:12.3px;color:#bdbdbd">pages/other/other</div>
<svg style="left:186px;top:1049px" width="16" height="16"><path d="M2.2,11.7 V3.5 Q2.2,2.5 3.2,2.5 H11.8" fill="none" stroke="#a0a0a0" stroke-width="1.15"/><rect x="4.5" y="4.6" width="9.1" height="9" rx="1" fill="none" stroke="#a0a0a0" stroke-width="1.15"/></svg>
<svg style="left:410px;top:1048px" width="17" height="17"><ellipse cx="8.5" cy="10" rx="4.2" ry="5.2" fill="none" stroke="#999" stroke-width="1.1"/><path d="M8.5 5V15.2M6.5 4Q8.5 1.5 10.5 4M4.3 8.5H1.5M4.3 12H2M12.7 8.5H15.5M12.7 12H15M5 6.5L3 5M12 6.5L14 5" fill="none" stroke="#999" stroke-width="1.1"/></svg>
<svg style="left:444px;top:1051px" width="17" height="11"><path d="M1 5.5C4 0.5 13 0.5 16 5.5C13 10.5 4 10.5 1 5.5Z" fill="none" stroke="#999" stroke-width="1.1"/><circle cx="8.5" cy="5.5" r="2.3" fill="none" stroke="#999" stroke-width="1.1"/></svg>
<svg style="left:477px;top:1054px" width="16" height="4"><circle cx="2.0" cy="2" r="1.1" fill="#a0a0a0"/><circle cx="7.5" cy="2" r="1.1" fill="#a0a0a0"/><circle cx="13.0" cy="2" r="1.1" fill="#a0a0a0"/></svg>

<!-- divider sim/explorer -->
<div class="a" style="left:500px;top:92px;width:1px;height:978px;background:#1f1f1f"></div>

<!-- ===== explorer ===== -->
<!-- ===== explorer ===== -->
<div class="a" style="left:501px;top:92px;width:200px;height:950px;background:#2e2e2e"></div>
<div class="a" style="left:501px;top:92px;width:200px;height:30px;background:#333333"></div>
<svg style="left:509px;top:99px" width="16" height="17"><path d="M4.5 4.5H1.5V16H9V13" fill="none" stroke="#fff" stroke-width="1.3"/><path d="M4.5 1H11L14.5 4.5V13H4.5Z" fill="none" stroke="#fff" stroke-width="1.3"/></svg>
<svg style="left:541px;top:99px" width="16" height="17"><circle cx="10" cy="6" r="5" fill="none" stroke="#9a9a9a" stroke-width="1.2"/><path d="M6.5 9.5L1 15.5" stroke="#9a9a9a" stroke-width="1.3"/></svg>
<svg style="left:574px;top:99px" width="14" height="17"><circle cx="3" cy="2.5" r="1.9" fill="none" stroke="#9a9a9a" stroke-width="1.2"/><circle cx="3" cy="14" r="1.9" fill="none" stroke="#9a9a9a" stroke-width="1.2"/><circle cx="11" cy="6" r="1.9" fill="none" stroke="#9a9a9a" stroke-width="1.2"/><path d="M3 4.4V12.1M3 11Q10 10 11 8" fill="none" stroke="#9a9a9a" stroke-width="1.2"/></svg>
<svg style="left:604px;top:99px" width="16" height="16"><rect x="0.6" y="6" width="5.5" height="5.5" fill="none" stroke="#9a9a9a" stroke-width="1.2"/><rect x="6.1" y="6" width="5.5" height="5.5" fill="none" stroke="#9a9a9a" stroke-width="1.2"/><rect x="0.6" y="11.5" width="5.5" height="4" fill="none" stroke="#9a9a9a" stroke-width="1.2"/><rect x="6.1" y="11.5" width="5.5" height="4" fill="none" stroke="#9a9a9a" stroke-width="1.2"/><rect x="9" y="0.6" width="6" height="5.5" fill="none" stroke="#9a9a9a" stroke-width="1.2"/></svg>
<svg style="left:639px;top:99px" width="15" height="16"><path d="M0.6 0.6H14.4V15.4H0.6Z" fill="none" stroke="#9a9a9a" stroke-width="1.2"/><path d="M3.5 0.6V5H11.5V0.6M0.6 8H11.5V15.4" fill="none" stroke="#9a9a9a" stroke-width="1.2"/></svg>
<svg style="left:668px;top:101px" width="18" height="12"><path d="M1 6H15Q16 5 17 5.5Q16.5 7 15.5 7.5Q13 12 7 11.5Q2 11 1 6Z" fill="#9a9a9a"/><rect x="4" y="3" width="2.5" height="2.5" fill="#9a9a9a"/><rect x="7" y="3" width="2.5" height="2.5" fill="#9a9a9a"/><rect x="10" y="3" width="2.5" height="2.5" fill="#9a9a9a"/><rect x="7" y="0" width="2.5" height="2.5" fill="#9a9a9a"/></svg>
<div class="t" style="left:521px;top:134px;font-size:11px;color:#e0e0e0">资源管理器</div>
<svg style="left:666px;top:137px" width="16" height="4"><circle cx="2.0" cy="2" r="1.1" fill="#e0e0e0"/><circle cx="7.5" cy="2" r="1.1" fill="#e0e0e0"/><circle cx="13.0" cy="2" r="1.1" fill="#e0e0e0"/></svg>
<div class="a" style="left:501px;top:157px;width:199px;height:44px;background:#383838"></div>
<svg style="left:509px;top:164px" width="5" height="8"><path d="M0 0L5 4L0 8Z" fill="#c8c8c8"/></svg>
<div class="t" style="left:521px;top:163px;font-size:11px;color:#d0d0d0;font-weight:bold">打开的编辑器</div>
<svg style="left:508px;top:188px" width="8" height="5"><path d="M0 0H8L4 5Z" fill="#c8c8c8"/></svg>
<div class="t" style="left:521px;top:185px;font-size:11px;color:#d0d0d0;font-weight:bold">喝酒小程序</div>
<div class="a" style="left:501px;top:311px;width:199px;height:22px;background:#424242"></div>
<!-- folder rows -->
<svg style="left:522px;top:208px" width="5" height="8"><path d="M0 0L5 4L0 8Z" fill="#c8c8c8"/></svg>
<svg style="left:536px;top:206px" width="15" height="12"><path d="M0 1.5Q0 0 1.5 0H5.5L7 1.8H13.5Q15 1.8 15 3.3V10.5Q15 12 13.5 12H1.5Q0 12 0 10.5Z" fill="#90a4ae"/></svg>
<div class="t" style="left:557px;top:205px;font-size:13px;color:#d4d4d4">@babel</div>
<svg style="left:522px;top:230px" width="5" height="8"><path d="M0 0L5 4L0 8Z" fill="#c8c8c8"/></svg>
<svg style="left:536px;top:228px" width="15" height="12"><path d="M0 1.5Q0 0 1.5 0H5.5L7 1.8H13.5Q15 1.8 15 3.3V10.5Q15 12 13.5 12H1.5Q0 12 0 10.5Z" fill="#90a4ae"/></svg>
<div class="t" style="left:557px;top:227px;font-size:13px;color:#d4d4d4">common</div>
<svg style="left:522px;top:252px" width="5" height="8"><path d="M0 0L5 4L0 8Z" fill="#c8c8c8"/></svg>
<svg style="left:536px;top:250px" width="15" height="14"><path d="M0 1.5Q0 0 1.5 0H5.5L7 1.8H13.5Q15 1.8 15 3.3V10.5Q15 12 13.5 12H1.5Q0 12 0 10.5Z" fill="#ff6e40"/><rect x="7" y="5" width="7.5" height="8.5" rx="1" fill="#ffab91" stroke="#2c2c2c" stroke-width="0.8"/><path d="M9.5 7.8L8.5 9.2L9.5 10.6M12 7.8L13 9.2L12 10.6" fill="none" stroke="#d84315" stroke-width="0.8"/></svg>
<div class="t" style="left:557px;top:249px;font-size:13px;color:#d4d4d4">pages</div>
<svg style="left:522px;top:274px" width="5" height="8"><path d="M0 0L5 4L0 8Z" fill="#c8c8c8"/></svg>
<svg style="left:536px;top:272px" width="15" height="14"><path d="M0 1.5Q0 0 1.5 0H5.5L7 1.8H13.5Q15 1.8 15 3.3V10.5Q15 12 13.5 12H1.5Q0 12 0 10.5Z" fill="#7cb342"/><rect x="7" y="5" width="7.5" height="8.5" rx="1" fill="#c5e1a5" stroke="#2c2c2c" stroke-width="0.8"/><path d="M10.7 7V11.5M8.5 9.2H13" stroke="#33691e" stroke-width="1"/></svg>
<div class="t" style="left:557px;top:271px;font-size:13px;color:#d4d4d4">utils</div>
<div class="a" style="left:537px;top:294px;width:13px;height:12px;background:#f5c518"></div>
<div class="t" style="left:542px;top:300px;font-size:6px;color:#333;font-weight:bold">JS</div>
<div class="t" style="left:557px;top:293px;font-size:13px;color:#d4d4d4">app.js</div>
<svg style="left:534px;top:315px" width="17" height="14"><path d="M5.5,1 Q3,1 3,3.5 L3,5.5 Q3,7 1,7 Q3,7 3,8.5 L3,10.5 Q3,13 5.5,13 M11.5,1 Q14,1 14,3.5 L14,5.5 Q14,7 16,7 Q14,7 14,8.5 L14,10.5 Q14,13 11.5,13" fill="none" stroke="#f5c518" stroke-width="1.5"/><circle cx="6.3" cy="10" r="0.8" fill="#f5c518"/><circle cx="8.5" cy="10" r="0.8" fill="#f5c518"/><circle cx="10.7" cy="10" r="0.8" fill="#f5c518"/></svg>
<div class="t" style="left:557px;top:315px;font-size:13px;color:#d4d4d4">app.json</div>
<svg style="left:536px;top:338px" width="14" height="13"><path d="M1 0H13L12 10L7 12.5L2 10Z" fill="#42a5f5"/><path d="M4 2.5H10L9.6 8L7 9.2L4.5 8" fill="none" stroke="#2c2c2c" stroke-width="1.2"/><path d="M4.3 5.3H9.7" stroke="#2c2c2c" stroke-width="1.2"/></svg>
<div class="t" style="left:557px;top:337px;font-size:13px;color:#d4d4d4">app.wxss</div>
<svg style="left:534px;top:359px" width="17" height="14"><path d="M5.5,1 Q3,1 3,3.5 L3,5.5 Q3,7 1,7 Q3,7 3,8.5 L3,10.5 Q3,13 5.5,13 M11.5,1 Q14,1 14,3.5 L14,5.5 Q14,7 16,7 Q14,7 14,8.5 L14,10.5 Q14,13 11.5,13" fill="none" stroke="#f5c518" stroke-width="1.5"/><circle cx="6.3" cy="10" r="0.8" fill="#f5c518"/><circle cx="8.5" cy="10" r="0.8" fill="#f5c518"/><circle cx="10.7" cy="10" r="0.8" fill="#f5c518"/></svg>
<div class="t" style="left:557px;top:359px;font-size:13px;color:#d4d4d4">project.config.json</div>
<svg style="left:534px;top:381px" width="17" height="14"><path d="M5.5,1 Q3,1 3,3.5 L3,5.5 Q3,7 1,7 Q3,7 3,8.5 L3,10.5 Q3,13 5.5,13 M11.5,1 Q14,1 14,3.5 L14,5.5 Q14,7 16,7 Q14,7 14,8.5 L14,10.5 Q14,13 11.5,13" fill="none" stroke="#f5c518" stroke-width="1.5"/><circle cx="6.3" cy="10" r="0.8" fill="#f5c518"/><circle cx="8.5" cy="10" r="0.8" fill="#f5c518"/><circle cx="10.7" cy="10" r="0.8" fill="#f5c518"/></svg>
<div class="t" style="left:557px;top:381px;font-size:12.7px;color:#d4d4d4">project.private.config.js...</div>
<svg style="left:534px;top:403px" width="17" height="14"><path d="M5.5,1 Q3,1 3,3.5 L3,5.5 Q3,7 1,7 Q3,7 3,8.5 L3,10.5 Q3,13 5.5,13 M11.5,1 Q14,1 14,3.5 L14,5.5 Q14,7 16,7 Q14,7 14,8.5 L14,10.5 Q14,13 11.5,13" fill="none" stroke="#f5c518" stroke-width="1.5"/><circle cx="6.3" cy="10" r="0.8" fill="#f5c518"/><circle cx="8.5" cy="10" r="0.8" fill="#f5c518"/><circle cx="10.7" cy="10" r="0.8" fill="#f5c518"/></svg>
<div class="t" style="left:557px;top:403px;font-size:13px;color:#d4d4d4">sitemap.json</div>
<!-- outline -->
<div class="a" style="left:501px;top:1025px;width:199px;height:17px;background:#383838"></div>
<svg style="left:509px;top:1031px" width="5" height="8"><path d="M0 0L5 4L0 8Z" fill="#c8c8c8"/></svg>
<div class="t" style="left:521px;top:1030px;font-size:11px;color:#d0d0d0;font-weight:bold">大纲</div>
<div class="a" style="left:700px;top:92px;width:1px;height:950px;background:#252525"></div>


<!-- ===== editor ===== -->
<!-- ===== editor ===== -->
<div class="a" style="left:701px;top:92px;width:708px;height:30px;background:#383838"></div>
<div class="a" style="left:701px;top:92px;width:120px;height:30px;background:#2e2e2e"></div>
<div class="a" style="left:701px;top:122px;width:708px;height:618px;background:#2e2e2e;overflow:hidden">
<div class="a" style="left:52px;top:246px;width:656px;height:32px;background:#4a4a4a"></div>
<div class="a" style="left:52px;top:54px;width:1px;height:564px;background:#454545"></div>
<div class="a" style="left:70px;top:86px;width:1px;height:512px;background:#454545"></div>
<div class="a" style="left:149px;top:54px;width:9.5px;height:32px;border:1px solid #8a8a8a;background:#2a3428"></div>
<div class="a" style="left:70px;top:598px;width:9.5px;height:32px;border:1px solid #8a8a8a;background:#2a3428"></div>
<div class="ln" style="left:0;top:22px;color:#6b6b6b">1</div>
<div class="mono" style="position:absolute;left:52px;top:23px;height:32px;line-height:32px;font-size:14.67px;white-space:pre"><span class="q">{</span></div>
<div class="ln" style="left:0;top:54px;color:#6b6b6b">2</div>
<div class="mono" style="position:absolute;left:52px;top:55px;height:32px;line-height:32px;font-size:14.67px;white-space:pre">  <span class="q">"</span><span class="k">pages</span><span class="q">"</span><span class="q">:</span> <span class="q">[</span></div>
<div class="ln" style="left:0;top:86px;color:#6b6b6b">3</div>
<div class="mono" style="position:absolute;left:52px;top:87px;height:32px;line-height:32px;font-size:14.67px;white-space:pre">    <span class="q">"</span><span class="s">pages/other/other</span><span class="q">"</span><span class="q">,</span></div>
<div class="ln" style="left:0;top:118px;color:#6b6b6b">4</div>
<div class="mono" style="position:absolute;left:52px;top:119px;height:32px;line-height:32px;font-size:14.67px;white-space:pre">    <span class="q">"</span><span class="s">pages/eyu/eyu</span><span class="q">"</span><span class="q">,</span></div>
<div class="ln" style="left:0;top:150px;color:#6b6b6b">5</div>
<div class="mono" style="position:absolute;left:52px;top:151px;height:32px;line-height:32px;font-size:14.67px;white-space:pre">    <span class="q">"</span><span class="s">pages/dage/dage</span><span class="q">"</span><span class="q">,</span></div>
<div class="ln" style="left:0;top:182px;color:#6b6b6b">6</div>
<div class="mono" style="position:absolute;left:52px;top:183px;height:32px;line-height:32px;font-size:14.67px;white-space:pre">    <span class="q">"</span><span class="s">pages/index/index</span><span class="q">"</span><span class="q">,</span></div>
<div class="ln" style="left:0;top:214px;color:#6b6b6b">7</div>
<div class="mono" style="position:absolute;left:52px;top:215px;height:32px;line-height:32px;font-size:14.67px;white-space:pre">    <span class="q">"</span><span class="s">pages/zhijian/zhijian</span><span class="q">"</span><span class="q">,</span></div>
<div class="ln" style="left:0;top:246px;color:#c6c6c6">8</div>
<div class="mono" style="position:absolute;left:52px;top:247px;height:32px;line-height:32px;font-size:14.67px;white-space:pre">    <span class="q">"</span><span class="s">pages/shezhi/shezhi</span><span class="q">"</span><span class="q">,</span></div>
<div class="ln" style="left:0;top:278px;color:#6b6b6b">9</div>
<div class="mono" style="position:absolute;left:52px;top:279px;height:32px;line-height:32px;font-size:14.67px;white-space:pre">    <span class="q">"</span><span class="s">pages/gameplay/gameplay</span><span class="q">"</span><span class="q">,</span></div>
<div class="ln" style="left:0;top:310px;color:#6b6b6b">10</div>
<div class="mono" style="position:absolute;left:52px;top:311px;height:32px;line-height:32px;font-size:14.67px;white-space:pre">    <span class="q">"</span><span class="s">pages/zhuanpan/zhuanpan</span><span class="q">"</span><span class="q">,</span></div>
<div class="ln" style="left:0;top:342px;color:#6b6b6b">11</div>
<div class="mono" style="position:absolute;left:52px;top:343px;height:32px;line-height:32px;font-size:14.67px;white-space:pre">    <span class="q">"</span><span class="s">pages/index3/index</span><span class="q">"</span><span class="q">,</span></div>
<div class="ln" style="left:0;top:374px;color:#6b6b6b">12</div>
<div class="mono" style="position:absolute;left:52px;top:375px;height:32px;line-height:32px;font-size:14.67px;white-space:pre">    <span class="q">"</span><span class="s">pages/web/web</span><span class="q">"</span><span class="q">,</span></div>
<div class="ln" style="left:0;top:406px;color:#6b6b6b">13</div>
<div class="mono" style="position:absolute;left:52px;top:407px;height:32px;line-height:32px;font-size:14.67px;white-space:pre">    <span class="q">"</span><span class="s">pages/dengguang/dengguang</span><span class="q">"</span><span class="q">,</span></div>
<div class="ln" style="left:0;top:438px;color:#6b6b6b">14</div>
<div class="mono" style="position:absolute;left:52px;top:439px;height:32px;line-height:32px;font-size:14.67px;white-space:pre">    <span class="q">"</span><span class="s">pages/danmu/danmu</span><span class="q">"</span><span class="q">,</span></div>
<div class="ln" style="left:0;top:470px;color:#6b6b6b">15</div>
<div class="mono" style="position:absolute;left:52px;top:471px;height:32px;line-height:32px;font-size:14.67px;white-space:pre">    <span class="q">"</span><span class="s">pages/select/select</span><span class="q">"</span><span class="q">,</span></div>
<div class="ln" style="left:0;top:502px;color:#6b6b6b">16</div>
<div class="mono" style="position:absolute;left:52px;top:503px;height:32px;line-height:32px;font-size:14.67px;white-space:pre">    <span class="q">"</span><span class="s">pages/attributes/attributes</span><span class="q">"</span><span class="q">,</span></div>
<div class="ln" style="left:0;top:534px;color:#6b6b6b">17</div>
<div class="mono" style="position:absolute;left:52px;top:535px;height:32px;line-height:32px;font-size:14.67px;white-space:pre">    <span class="q">"</span><span class="s">pages/game/game</span><span class="q">"</span><span class="q">,</span></div>
<div class="ln" style="left:0;top:566px;color:#6b6b6b">18</div>
<div class="mono" style="position:absolute;left:52px;top:567px;height:32px;line-height:32px;font-size:14.67px;white-space:pre">    <span class="q">"</span><span class="s">pages/summarize/summarize</span><span class="q">"</span></div>
<div class="ln" style="left:0;top:598px;color:#6b6b6b">19</div>
<div class="mono" style="position:absolute;left:52px;top:599px;height:32px;line-height:32px;font-size:14.67px;white-space:pre">  <span class="q">]</span><span class="q">,</span></div>
<svg style="left:34px;top:27px" width="11" height="6"><path d="M0.5 0.5L5.5 5L10.5 0.5" fill="none" stroke="#c0c0c0" stroke-width="1.2"/></svg>
<svg style="left:34px;top:59px" width="11" height="6"><path d="M0.5 0.5L5.5 5L10.5 0.5" fill="none" stroke="#c0c0c0" stroke-width="1.2"/></svg>
<div class="a" style="left:693px;top:22px;width:1px;height:596px;background:#444"></div>
<div class="a" style="left:707px;top:22px;width:1px;height:596px;background:#3c3c3c"></div>
<div class="a" style="left:694px;top:22px;width:13px;height:243px;background:#4d4d4d"></div>
<div class="a" style="left:694px;top:112px;width:13px;height:2px;background:#787878"></div>
<div class="a" style="left:694px;top:246px;width:13px;height:19px;background:#5c5c5c"></div>
</div><!-- tab -->
<svg style="left:710px;top:101px" width="17" height="14"><path d="M5.5,1 Q3,1 3,3.5 L3,5.5 Q3,7 1,7 Q3,7 3,8.5 L3,10.5 Q3,13 5.5,13 M11.5,1 Q14,1 14,3.5 L14,5.5 Q14,7 16,7 Q14,7 14,8.5 L14,10.5 Q14,13 11.5,13" fill="none" stroke="#f5c518" stroke-width="1.5"/><circle cx="6.3" cy="10" r="0.8" fill="#f5c518"/><circle cx="8.5" cy="10" r="0.8" fill="#f5c518"/><circle cx="10.7" cy="10" r="0.8" fill="#f5c518"/></svg>
<div class="t" style="left:733px;top:101px;font-size:13px;color:#ffffff">app.json</div>
<svg style="left:799px;top:102px" width="10" height="10"><path d="M0.5 0.5L9.5 9.5M9.5 0.5L0.5 9.5" stroke="#f0f0f0" stroke-width="1.5"/></svg>
<svg style="left:1312px;top:99px" width="15" height="15"><path d="M7 1H11L14 4V14H5V8" fill="none" stroke="#ddd" stroke-width="1.1"/><path d="M5 7V3.5Q5 2 6.5 2M1.5 4L4 1.5M1.5 4L4 6.5M1.5 4H5.5" fill="none" stroke="#ddd" stroke-width="1.1"/></svg>
<svg style="left:1344px;top:100px" width="13" height="13"><rect x="0.6" y="0.6" width="11.8" height="11.8" fill="none" stroke="#ddd" stroke-width="1.2"/><path d="M6.5 0.6V12.4" stroke="#ddd" stroke-width="1.2"/></svg>
<svg style="left:1374px;top:105px" width="16" height="4"><circle cx="2.0" cy="2" r="1.1" fill="#e0e0e0"/><circle cx="7.5" cy="2" r="1.1" fill="#e0e0e0"/><circle cx="13.0" cy="2" r="1.1" fill="#e0e0e0"/></svg>
<!-- breadcrumb -->
<svg style="left:708px;top:128px" width="15" height="11"><path d="M3 0.8H15M3 3.8H15M3 6.8H15M3 9.8H15" stroke="#9a9a9a" stroke-width="1"/><path d="M0 0.8H1.5M0 3.8H1.5M0 6.8H1.5M0 9.8H1.5" stroke="#9a9a9a" stroke-width="1"/></svg>
<svg style="left:740px;top:126px" width="12" height="14"><path d="M0.6 0.6H11.4V13L6 8.5L0.6 13Z" fill="none" stroke="#9a9a9a" stroke-width="1.2"/></svg>
<svg style="left:769px;top:128px" width="14" height="11"><path d="M13.5 5.5H1M5.5 1L1 5.5L5.5 10" fill="none" stroke="#9a9a9a" stroke-width="1.2"/></svg>
<svg style="left:797px;top:128px" width="14" height="11"><path d="M0.5 5.5H13M8.5 1L13 5.5L8.5 10" fill="none" stroke="#555" stroke-width="1.2"/></svg>
<svg style="left:826px;top:127px" width="17" height="14"><path d="M5.5,1 Q3,1 3,3.5 L3,5.5 Q3,7 1,7 Q3,7 3,8.5 L3,10.5 Q3,13 5.5,13 M11.5,1 Q14,1 14,3.5 L14,5.5 Q14,7 16,7 Q14,7 14,8.5 L14,10.5 Q14,13 11.5,13" fill="none" stroke="#f5c518" stroke-width="1.5"/><circle cx="6.3" cy="10" r="0.8" fill="#f5c518"/><circle cx="8.5" cy="10" r="0.8" fill="#f5c518"/><circle cx="10.7" cy="10" r="0.8" fill="#f5c518"/></svg>
<div class="t" style="left:849px;top:127px;font-size:12.7px;color:#a8a8a8">app.json</div>
<svg style="left:903px;top:128px" width="6" height="11"><path d="M0.5 0.5L5.5 5.5L0.5 10.5" fill="none" stroke="#a8a8a8" stroke-width="1.1"/></svg>
<div class="t" style="left:912px;top:127px;font-size:12.7px;color:#a8a8a8">[</div><div class="t" style="left:924px;top:127px;font-size:12.7px;color:#a8a8a8">]</div>
<div class="t" style="left:935px;top:127px;font-size:12.7px;color:#a8a8a8">pages</div>


<!-- ===== devtools ===== -->
<!-- ===== devtools ===== -->
<div class="a" style="left:701px;top:740px;width:708px;height:1px;background:#454545"></div>
<div class="a" style="left:701px;top:741px;width:708px;height:29px;background:#333333"></div>
<div class="t" style="left:720px;top:751px;font-size:11.5px;color:#a0a0a0">构建</div>
<div class="t" style="left:763px;top:751px;font-size:11.5px;color:#f0f0f0">调试器</div>
<div class="a" style="left:763px;top:768px;width:33px;height:2px;background:#e8e8e8"></div>
<div class="a" style="left:804px;top:747px;width:33px;height:18px;border-radius:9px;background:#c8433b"></div>
<div class="t" style="left:804px;top:750px;width:33px;text-align:center;font-size:11.5px;color:#fff">14, 8</div>
<div class="t" style="left:857px;top:751px;font-size:11.5px;color:#a0a0a0">问题</div>
<div class="t" style="left:899px;top:751px;font-size:11.5px;color:#a0a0a0">输出</div>
<div class="t" style="left:941px;top:751px;font-size:11.5px;color:#a0a0a0">终端</div>
<div class="t" style="left:983px;top:751px;font-size:11.5px;color:#a0a0a0">代码质量</div>
<svg style="left:1344px;top:752px" width="12" height="8"><path d="M0.5 7L6 1.5L11.5 7" fill="none" stroke="#e0e0e0" stroke-width="1.4"/></svg>
<svg style="left:1377px;top:751px" width="11" height="11"><path d="M0.5 0.5L10.5 10.5M10.5 0.5L0.5 10.5" stroke="#e0e0e0" stroke-width="1.4"/></svg>
<!-- tab strip -->
<div class="a" style="left:701px;top:770px;width:708px;height:26px;background:#292a2d"></div>
<div class="a" style="left:701px;top:796px;width:708px;height:1px;background:#3d3d3d"></div>
<svg style="left:710px;top:776px" width="15" height="15"><path d="M6 13H1.5Q0.6 13 0.6 12V1.6Q0.6 0.6 1.6 0.6H12Q13 0.6 13 1.6V6" fill="none" stroke="#9aa0a6" stroke-width="1.2"/><path d="M6 6L14.5 9.2L10.8 10.6L14.2 14L13 15L9.6 11.8L8.2 14.8Z" fill="#9aa0a6"/></svg>
<div class="a" style="left:735px;top:776px;width:1px;height:15px;background:#444"></div>
<div class="a" style="left:742px;top:770px;width:54px;height:26px;background:#000"></div>
<div class="t" style="left:754px;top:778px;font-size:12px;color:#ffffff">Wxml</div>
<div class="t" style="left:807px;top:778px;font-size:12px;color:#e8eaed">Console</div>
<div class="t" style="left:873px;top:778px;font-size:12px;color:#e8eaed">Sources</div>
<div class="t" style="left:938px;top:778px;font-size:12px;color:#e8eaed">Network</div>
<div class="t" style="left:1007px;top:778px;font-size:11.6px;color:#e8eaed">Performance</div>
<div class="t" style="left:1097px;top:778px;font-size:12px;color:#e8eaed">Memory</div>
<svg style="left:1162px;top:778px" width="10" height="9"><path d="M0.5 0.5L4.5 4.5L0.5 8.5M5 0.5L9 4.5L5 8.5" fill="none" stroke="#c8c8c8" stroke-width="1.2"/></svg>
<div class="a" style="left:1253px;top:778px;width:12px;height:12px;border-radius:50%;background:#e33b3b"></div>
<svg style="left:1256px;top:781px" width="6" height="6"><path d="M0.8 0.8L5.2 5.2M5.2 0.8L0.8 5.2" stroke="#fff" stroke-width="1.3"/></svg>
<div class="t" style="left:1268px;top:778px;font-size:12px;color:#e8eaed">14</div>
<svg style="left:1287px;top:778px" width="10" height="10"><path d="M5 0.5L9.6 9.5H0.4Z" fill="#f2b600"/><path d="M5 3.5V6.5M5 7.5V8.5" stroke="#222" stroke-width="1.2"/></svg>
<div class="t" style="left:1299px;top:778px;font-size:12px;color:#e8eaed">8</div>
<div class="a" style="left:1317px;top:775px;width:1px;height:17px;background:#444"></div>
<svg style="left:1329px;top:777px" width="14" height="14"><path d="M7 0.5L8.3 0.7L8.6 2.3L9.8 2.8L11.2 1.9L12.1 2.8L11.2 4.2L11.7 5.4L13.3 5.7L13.5 7L13.3 8.3L11.7 8.6L11.2 9.8L12.1 11.2L11.2 12.1L9.8 11.2L8.6 11.7L8.3 13.3L7 13.5L5.7 13.3L5.4 11.7L4.2 11.2L2.8 12.1L1.9 11.2L2.8 9.8L2.3 8.6L0.7 8.3L0.5 7L0.7 5.7L2.3 5.4L2.8 4.2L1.9 2.8L2.8 1.9L4.2 2.8L5.4 2.3L5.7 0.7Z" fill="#9aa0a6"/><circle cx="7" cy="7" r="2.3" fill="#292a2d"/></svg>
<div class="a" style="left:1362.5px;top:777px;width:3px;height:3px;border-radius:50%;background:#9aa0a6"></div>
<div class="a" style="left:1362.5px;top:782.5px;width:3px;height:3px;border-radius:50%;background:#9aa0a6"></div>
<div class="a" style="left:1362.5px;top:788px;width:3px;height:3px;border-radius:50%;background:#9aa0a6"></div>
<svg style="left:1384px;top:776px" width="17" height="15"><path d="M0.8 4.5V14.2H12.5" fill="none" stroke="#9aa0a6" stroke-width="1.6"/><rect x="3.8" y="0.8" width="12.4" height="10" fill="none" stroke="#9aa0a6" stroke-width="1.6"/><rect x="3.8" y="0.8" width="12.4" height="2.5" fill="#9aa0a6"/></svg>
<!-- panel content -->
<div class="a" style="left:701px;top:797px;width:708px;height:245px;background:#242424"></div>
<div class="a" style="left:701px;top:797px;width:383px;height:26px;background:#292a2d"></div>
<div class="a" style="left:701px;top:823px;width:383px;height:1px;background:#494c50"></div>
<div class="a" style="left:709px;top:804px;width:12px;height:12px;border:1px solid #8a8a8a;border-radius:2px"></div>
<div class="t" style="left:727px;top:805px;font-size:12px;color:#e8eaed">Composed</div>
<div class="t mono" style="left:715px;top:830px;font-size:11px;color:#5db0d7">&lt;pages/other/other&gt;</div>
<svg style="left:718px;top:848px" width="5" height="8"><path d="M0 0L5 4L0 8Z" fill="#9a9a9a"/></svg>
<div class="t mono" style="left:726px;top:847px;font-size:11px;color:#ffffff">#shadow-root</div>
<div class="t mono" style="left:715px;top:864px;font-size:11px;color:#5db0d7">&lt;/pages/other/other&gt;</div>
<div class="a" style="left:701px;top:1019px;width:383px;height:1px;background:#494c50"></div>
<!-- styles pane -->
<div class="a" style="left:1083px;top:797px;width:1px;height:245px;background:#494c50"></div>
<div class="a" style="left:1084px;top:797px;width:325px;height:26px;background:#292a2d"></div>
<div class="a" style="left:1084px;top:797px;width:50px;height:26px;background:#000"></div>
<div class="t" style="left:1093px;top:805px;font-size:12px;color:#fff">Styles</div>
<div class="t" style="left:1144px;top:805px;font-size:12px;color:#e8eaed">Computed</div>
<div class="t" style="left:1220px;top:805px;font-size:12px;color:#e8eaed">Dataset</div>
<div class="t" style="left:1279px;top:805px;font-size:12px;color:#e8eaed">Component Data</div>
<div class="a" style="left:1084px;top:823px;width:325px;height:1px;background:#494c50"></div>
<div class="a" style="left:1084px;top:824px;width:325px;height:27px;background:#292a2d"></div>
<div class="a" style="left:1087px;top:828px;width:249px;height:19px;background:#202124"></div>
<div class="t" style="left:1091px;top:832px;font-size:12px;color:#9aa0a6">Filter</div>
<div class="t mono" style="left:1347px;top:832px;font-size:12px;color:#e8eaed;font-weight:bold">.cls</div>
<svg style="left:1387px;top:831px" width="11" height="11"><path d="M5.5 0V11M0 5.5H11" stroke="#777" stroke-width="1.3"/></svg>
<svg style="left:1400px;top:843px" width="4" height="4"><path d="M4 0V4H0Z" fill="#777"/></svg>
<!-- status bar -->
<div class="a" style="left:501px;top:1042px;width:908px;height:28px;background:#383838"></div>
<svg style="left:516px;top:1050px" width="13" height="13"><circle cx="6.5" cy="6.5" r="5.8" fill="none" stroke="#bbb" stroke-width="1"/><path d="M4.3 4.3L8.7 8.7M8.7 4.3L4.3 8.7" stroke="#bbb" stroke-width="1"/></svg>
<div class="t" style="left:533px;top:1050px;font-size:12px;color:#bbb">0</div>
<svg style="left:544px;top:1049px" width="13" height="12"><path d="M6.5 0.8L12.3 11.3H0.7Z" fill="none" stroke="#bbb" stroke-width="1"/><path d="M6.5 4.5V8M6.5 9V10" stroke="#bbb" stroke-width="1"/></svg>
<div class="t" style="left:560px;top:1050px;font-size:12px;color:#bbb">0</div>
<div class="t" style="left:1166px;top:1050px;font-size:11.5px;color:#b8b8b8">行 8，列 28</div>
<div class="t" style="left:1244px;top:1050px;font-size:11.5px;color:#b8b8b8">空格: 2</div>
<div class="t" style="left:1296px;top:1050px;font-size:11.5px;color:#b8b8b8">UTF-8</div>
<div class="t" style="left:1344px;top:1050px;font-size:11.5px;color:#b8b8b8">LF</div>
<div class="t" style="left:1371px;top:1050px;font-size:11.5px;color:#b8b8b8">JSON</div>


</body></html>
